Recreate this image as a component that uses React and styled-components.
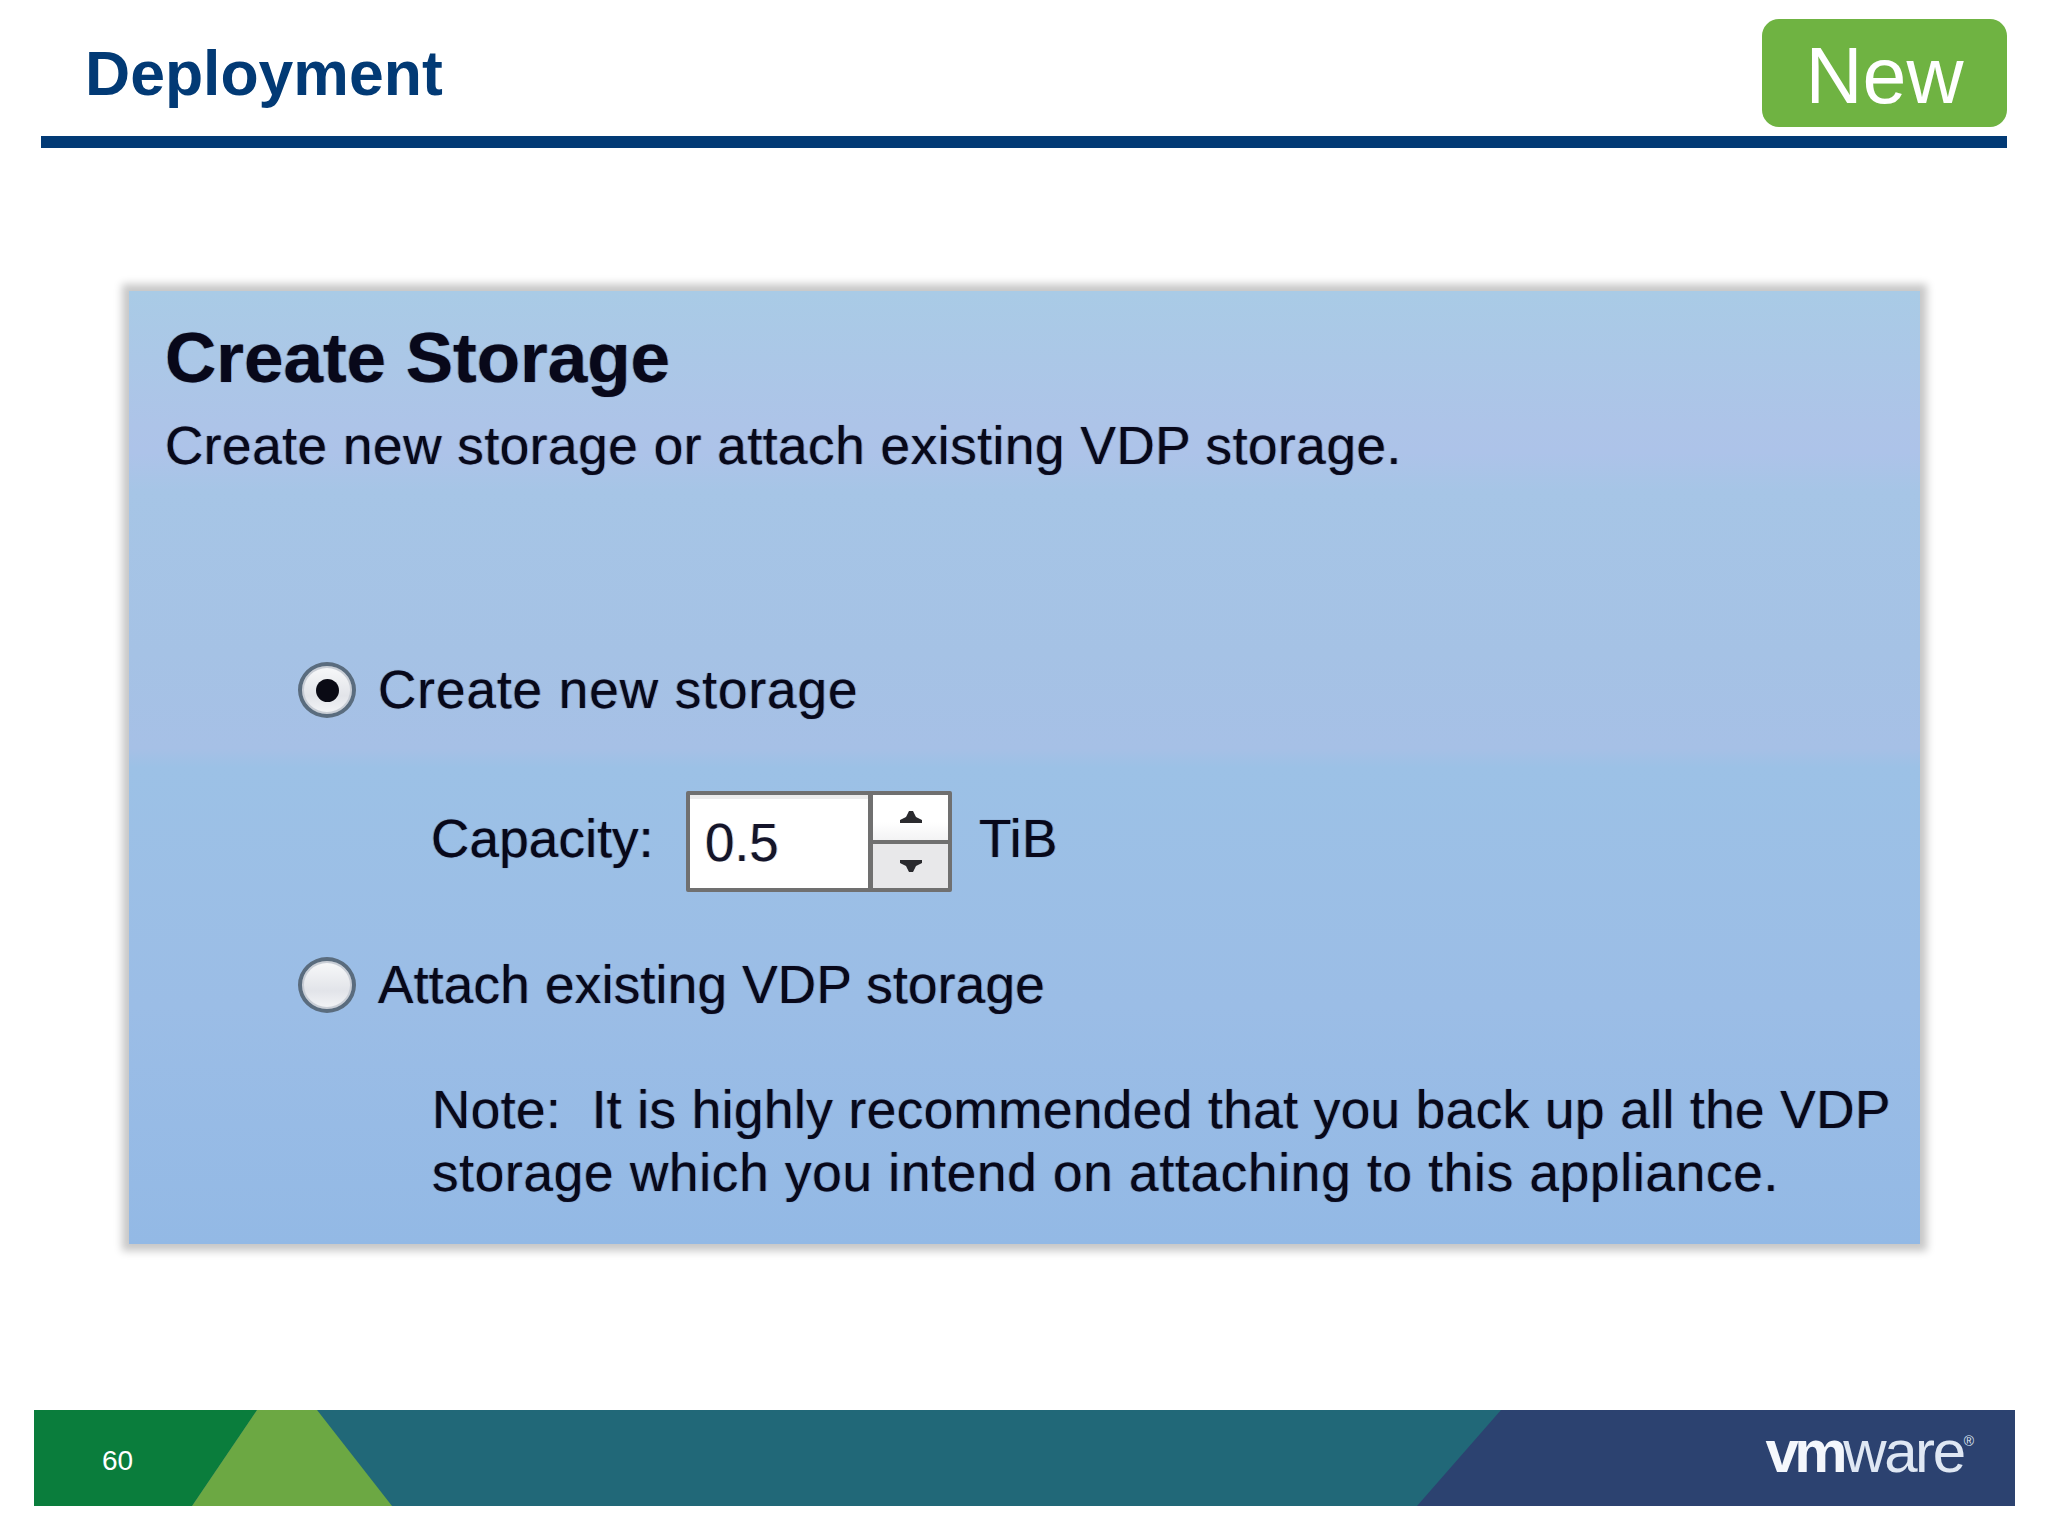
import React from "react";
import styled, { createGlobalStyle } from "styled-components";

const GlobalStyle = createGlobalStyle`
  html, body {
    margin: 0;
    padding: 0;
    background: #fff;
  }
  body {
    font-family: "Liberation Sans", Arial, sans-serif;
  }
`;

const Slide = styled.div`
  width: 2048px;
  height: 1536px;
  display: flex;
  flex-direction: column;
  overflow: hidden;
  background: #fff;
`;

const Header = styled.header`
  height: 136px;
  margin: 0 41px;
  padding: 19px 0 9px 44px;
  box-sizing: border-box;
  display: flex;
  justify-content: space-between;
  align-items: flex-start;
`;

const Title = styled.h1`
  margin: 0;
  padding-top: 19px;
  font-size: 62.5px;
  line-height: 70px;
  font-weight: 700;
  color: #023a75;
`;

const NewBadge = styled.div`
  width: 245px;
  height: 108px;
  border-radius: 17px;
  background: #6fb342;
  color: #fff;
  font-size: 79px;
  line-height: 113px;
  text-align: center;
`;

const Rule = styled.div`
  height: 12px;
  margin: 0 41px;
  background: #023a75;
`;

const Main = styled.main`
  flex: 1;
  padding: 143px 128px 0 129px;
`;

const Panel = styled.section`
  height: 953px;
  box-sizing: border-box;
  padding: 29px 0 0 36px;
  background: linear-gradient(
    180deg,
    #a9cbe6 0%,
    #adc4e8 14%,
    #adc3e9 17%,
    #a6c5e6 21%,
    #a5c2e5 38%,
    #a6c0e6 48%,
    #9cc1e6 50%,
    #9bbde6 75%,
    #93b9e5 100%
  );
  box-shadow: 0 0 8px 7px #c8c8c8;
  color: #08081a;
  text-shadow: 1px 0 0 rgba(0, 90, 230, 0.35), -1px 0 0 rgba(130, 90, 20, 0.4), 0 0 1px rgba(10, 10, 40, 0.5);
`;

const PanelTitle = styled.h2`
  margin: 0;
  font-size: 71px;
  line-height: 76px;
  font-weight: 700;
`;

const Subtitle = styled.p`
  margin: 20px 0 0;
  font-size: 53px;
  line-height: 60px;
  letter-spacing: 0.6px;
`;

const Options = styled.div`
  margin: 184px 0 0 133px;
  display: flex;
  flex-direction: column;
`;

const OptionRow = styled.div`
  display: flex;
  align-items: center;
  gap: 22px;
  height: 60px;
`;

const Radio = styled.span`
  width: 58px;
  height: 56px;
  flex: none;
  box-sizing: border-box;
  border-radius: 50%;
  border: 4px solid #5a6c7e;
  box-shadow: inset 0 0 0 2px #c9ced6;
  background: linear-gradient(180deg, #f8f9fa 0%, #e2e4e9 62%, #f4f5f7 100%);
  display: flex;
  align-items: center;
  justify-content: center;
`;

const RadioDot = styled.span`
  width: 23px;
  height: 23px;
  border-radius: 50%;
  background: #0a0a14;
`;

const Label = styled.span`
  font-size: 53px;
  line-height: 60px;
  letter-spacing: ${(p) => p.$spacing || 0}px;
  white-space: nowrap;
`;

const CapacityRow = styled.div`
  display: flex;
  align-items: center;
  height: 101px;
  margin: 71px 0 63px 133px;
`;

const CapacityLabel = styled(Label)`
  width: 255px;
  padding-bottom: 6px;
`;

const Spinner = styled.div`
  width: 266px;
  height: 101px;
  box-sizing: border-box;
  display: flex;
  background: #fff;
  border: 4px solid #707070;
  border-radius: 2px;
`;

const SpinnerValue = styled.div`
  flex: 1;
  padding-left: 15px;
  font-size: 53px;
  line-height: 95px;
  color: #14142a;
  border-right: 5px solid #707070;
  box-shadow: inset 0 4px 0 #ececec;
  text-shadow: 1px 0 0 rgba(0, 130, 255, 0.35), -1px 0 0 rgba(230, 140, 30, 0.45);
`;

const SpinnerButtons = styled.div`
  width: 75px;
  display: flex;
  flex-direction: column;
`;

const SpinnerButton = styled.div`
  flex: 1;
  display: flex;
  align-items: center;
  justify-content: center;
  background: ${(p) => (p.$down ? "#e8e8ea" : "linear-gradient(180deg, #ffffff 60%, #f3f3f4 100%)")};
  border-top: ${(p) => (p.$down ? "4px solid #707070" : "none")};
`;

const Unit = styled(Label)`
  margin-left: 27px;
  padding-bottom: 6px;
`;

const Note = styled.p`
  margin: 63px 0 0 134px;
  font-size: 53px;
  line-height: 63px;
  white-space: pre;
`;

const NoteLine = styled.span`
  display: block;
  letter-spacing: ${(p) => p.$spacing}px;
`;

const Footer = styled.footer`
  position: relative;
  height: 96px;
  margin: 0 33px 30px 34px;
  display: flex;
  align-items: center;
  justify-content: space-between;
  padding: 0 41px 0 68px;
  box-sizing: border-box;
  color: #fff;
`;

const FooterArt = styled.svg`
  position: absolute;
  inset: 0;
  width: 100%;
  height: 100%;
`;

const PageNumber = styled.span`
  position: relative;
  font-size: 28px;
  padding-top: 6px;
`;

const Logo = styled.span`
  position: relative;
  font-size: 60px;
  line-height: 60px;
  letter-spacing: -2.4px;
  padding-bottom: 12px;
  color: #dfe7f3;
`;

const LogoBold = styled.span`
  font-weight: 700;
  letter-spacing: -4.5px;
  color: #f4f7fc;
`;

const LogoMark = styled.sup`
  font-size: 14px;
  letter-spacing: 0;
  vertical-align: 26px;
  line-height: 0;
`;

function Arrow({ down }) {
  return (
    <svg width="24" height="14" viewBox="0 0 24 14">
      <path
        d={down ? "M1 1h22v3l-6 3-3 6h-4L7 7 1 4z" : "M10 1h4l3 6 6 3v3H1v-3l6-3z"}
        fill="#2a2a2e"
      />
    </svg>
  );
}

export default function App() {
  return (
    <Slide>
      <GlobalStyle />
      <Header>
        <Title>Deployment</Title>
        <NewBadge>New</NewBadge>
      </Header>
      <Rule />
      <Main>
        <Panel>
          <PanelTitle>Create Storage</PanelTitle>
          <Subtitle>Create new storage or attach existing VDP storage.</Subtitle>
          <Options>
            <OptionRow>
              <Radio>
                <RadioDot />
              </Radio>
              <Label $spacing={1}>Create new storage</Label>
            </OptionRow>
            <CapacityRow>
              <CapacityLabel $spacing={0.2}>Capacity:</CapacityLabel>
              <Spinner>
                <SpinnerValue>0.5</SpinnerValue>
                <SpinnerButtons>
                  <SpinnerButton>
                    <Arrow />
                  </SpinnerButton>
                  <SpinnerButton $down>
                    <Arrow down />
                  </SpinnerButton>
                </SpinnerButtons>
              </Spinner>
              <Unit $spacing={0.4}>TiB</Unit>
            </CapacityRow>
            <OptionRow>
              <Radio />
              <Label $spacing={0.3}>Attach existing VDP storage</Label>
            </OptionRow>
            <Note>
              <NoteLine $spacing={0.5}>Note:  It is highly recommended that you back up all the VDP</NoteLine>
              <NoteLine $spacing={0.8}>storage which you intend on attaching to this appliance.</NoteLine>
            </Note>
          </Options>
        </Panel>
      </Main>
      <Footer>
        <FooterArt viewBox="0 0 1981 96" preserveAspectRatio="none">
          <rect width="1981" height="96" fill="#216878" />
          <polygon points="0,0 223,0 158,96 0,96" fill="#0a7d3c" />
          <polygon points="223,0 283,0 358,96 158,96" fill="#6ca843" />
          <polygon points="1467,0 1981,0 1981,96 1383,96" fill="#2c4270" />
        </FooterArt>
        <PageNumber>60</PageNumber>
        <Logo>
          <LogoBold>vm</LogoBold>ware<LogoMark>®</LogoMark>
        </Logo>
      </Footer>
    </Slide>
  );
}
